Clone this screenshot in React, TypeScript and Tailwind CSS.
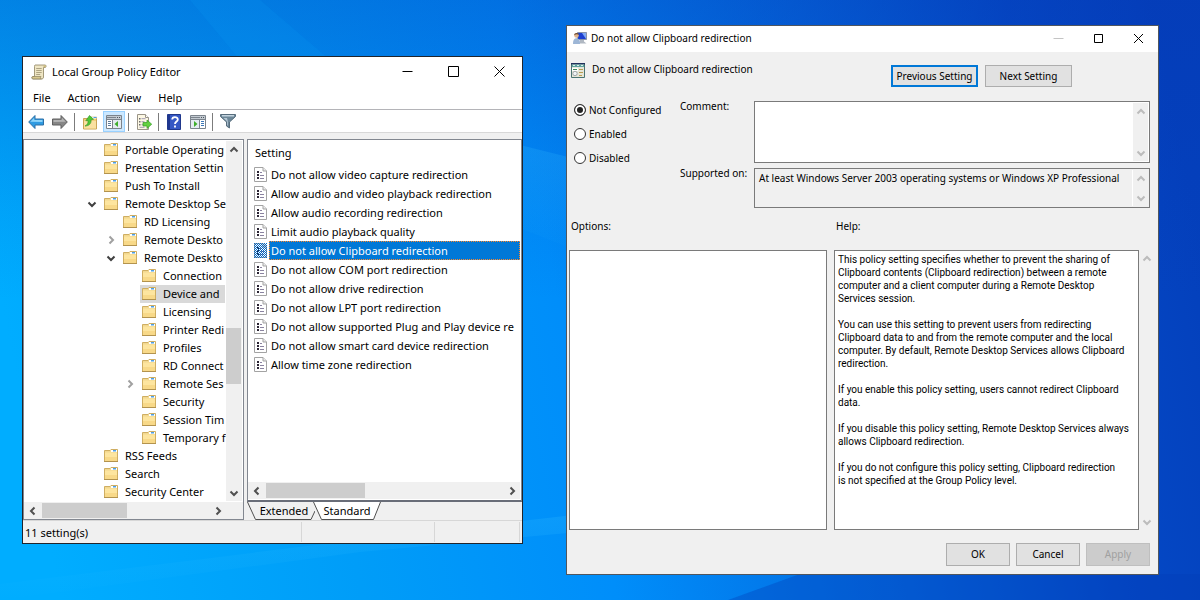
import { useState, type ReactNode } from "react";

type Direction = "up" | "down" | "left" | "right";

const chevrons: Record<Direction, string> = {
  up: "M1.5 6.5 5 3l3.5 3.5",
  down: "M1.5 3.5 5 7l3.5-3.5",
  left: "M6.5 1.5 3 5l3.5 3.5",
  right: "M3.5 1.5 7 5 3.5 8.5",
};

function Chevron({ dir, color = "#505050" }: { dir: Direction; color?: string }) {
  return (
    <svg viewBox="0 0 10 10" className="size-[10px] shrink-0" fill="none" stroke={color} strokeWidth="2">
      <path d={chevrons[dir]} />
    </svg>
  );
}

function ScrollButton({ dir, color }: { dir: Direction; color?: string }) {
  const vertical = dir === "up" || dir === "down";
  return (
    <button
      type="button"
      aria-label={`Scroll ${dir}`}
      className={`flex h-[17px] shrink-0 items-center justify-center ${vertical ? "w-full" : "w-[17px]"}`}
    >
      <Chevron dir={dir} color={color} />
    </button>
  );
}

function Backdrop() {
  return (
    <svg className="absolute inset-0 size-full" viewBox="0 0 1200 600" preserveAspectRatio="none" aria-hidden="true">
      <defs>
        <linearGradient id="sky" x1="0" y1="0.5" x2="1" y2="0.4">
          <stop offset="0" stopColor="#00adff" />
          <stop offset="0.25" stopColor="#009df8" />
          <stop offset="0.46" stopColor="#008efa" />
          <stop offset="0.7" stopColor="#0468de" />
          <stop offset="0.88" stopColor="#0449c6" />
          <stop offset="1" stopColor="#0440bc" />
        </linearGradient>
        <linearGradient id="dusk" x1="0" y1="0" x2="0" y2="1">
          <stop offset="0" stopColor="#0538b4" stopOpacity="0.34" />
          <stop offset="0.35" stopColor="#0538b4" stopOpacity="0.08" />
          <stop offset="0.5" stopColor="#0538b4" stopOpacity="0" />
        </linearGradient>
        <linearGradient id="ray" x1="0" y1="0" x2="0" y2="1">
          <stop offset="0" stopColor="#36c0ff" stopOpacity="0.22" />
          <stop offset="1" stopColor="#36c0ff" stopOpacity="0" />
        </linearGradient>
      </defs>
      <rect width="1200" height="600" fill="url(#sky)" />
      <rect width="1200" height="600" fill="url(#dusk)" />
      <path d="M0 584 340 542 600 512V530L360 552 0 600Z" fill="url(#ray)" />
      <path d="M500 140 600 165V260L500 220Z" fill="url(#ray)" />
      <path d="M728 600 800 574H1200V600Z" fill="#043cb8" fillOpacity="0.35" />
      <path d="M190 0H260L330 60H240Z" fill="#0a9af5" fillOpacity="0.18" />
    </svg>
  );
}

function FolderIcon() {
  return (
    <svg viewBox="0 0 14 14" className="size-[14px] shrink-0">
      <path d="M0.5 12.500V1.500h5.500L7 0.500h6.500V12.500Z" fill="#f2d890" stroke="#cfae62" />
      <path d="M1 3.500h12V12H1Z" fill="#fde59f" />
      <path d="M1 8h12v4H1Z" fill="#f8d989" />
      <path d="M7 1h6v2H7Z" fill="#fff" />
      <path d="M9 1h3v1.500H9Z" fill="#4d9fe6" />
      <path d="M0 12.500h14" stroke="#b3934e" />
    </svg>
  );
}

function PolicyIcon({ selected }: { selected?: boolean }) {
  return (
    <svg viewBox="0 0 13 15" className="h-[15px] w-[13px]">
      <path d="M0.5 0.500h8.500L12.500 4V14.500h-12Z" fill="#fff" stroke="#a3a3a3" />
      <path d="M9 0.500V4h3.500" fill="#ececec" stroke="#a3a3a3" />
      <path d="M3 4h2v2H3zM3 7h2v2H3zM3 10h2v2H3z" fill="#2a2433" />
      <path d="M6 5.500H8M6 8.500H10M6 11.500H10" stroke="#8a83a0" />
      {selected && (
        <>
          <defs>
            <pattern id="dither" width="2" height="2" patternUnits="userSpaceOnUse">
              <path d="M0 0h1v1H0zM1 1h1v1H1z" fill="#0068c8" />
            </pattern>
          </defs>
          <rect width="13" height="15" fill="url(#dither)" />
        </>
      )}
    </svg>
  );
}

function ScrollIcon() {
  return (
    <svg viewBox="0 0 16 16" className="size-4 shrink-0">
      <path d="M4 1h10.500c1 1 .5 2.500-.5 2.500h-1.500V13c0 1.500-1 2-2 2H2c-1.500 0-1.500-2.500 0-2.500h1.500V2.500C3.500 1.800 3.500 1.300 4 1Z" fill="#efe6c4" stroke="#8d8260" strokeWidth="0.8" />
      <path d="M2 12.500h8c-.8.8-.6 2 .3 2.400H2c-1.400 0-1.400-2.400 0-2.400Z" fill="#d9c98f" stroke="#8d8260" strokeWidth="0.7" />
      <path d="M5.200 4.500h5.500M5.200 6.500h5.500M5.200 8.500h5.500M5.200 10.500h4" stroke="#a69c7c" strokeWidth="0.9" />
      <path d="M12.500 1.300v2h1.800c.8-.6.600-1.600 0-2Z" fill="#cdbb7e" />
    </svg>
  );
}

function ArrowIcon({ back }: { back?: boolean }) {
  return (
    <svg viewBox="0 0 16 14" className="h-[14px] w-4">
      {back ? (
        <>
          <path d="M0.700 7 7 0.500V4h8.500v6H7v3.500Z" fill="#2f9be2" stroke="#2c6fa6" />
          <path d="M2.200 6.800 6.200 2.700V5h8.300v2Z" fill="#8ed4fa" />
        </>
      ) : (
        <>
          <path d="M15.300 7 9 0.500V4H0.500v6H9v3.500Z" fill="#868686" stroke="#5f5f5f" />
          <path d="M13.800 6.800 9.800 2.700V5H1.500v2Z" fill="#b4b4b4" />
        </>
      )}
    </svg>
  );
}

function UpFolderIcon() {
  return (
    <svg viewBox="0 0 16 16" className="size-4">
      <path d="M1.500 15V4.500H8L9.500 3H14.500V15Z" fill="#f0cd7c" stroke="#c9a456" />
      <path d="M2 7h12v7.500H2Z" fill="#fae0a0" />
      <path d="M10 2.500h4.500v2H10z" fill="#fff" />
      <path d="M11.500 3h3v1h-3z" fill="#4d9fe6" />
      <path d="M3 12C5.500 11 6.300 9 6 6.500L3.800 6.800 7.500 1.500 11.500 5.200 9 5.800C9.500 9.500 7 12 3 12Z" fill="#4fc836" stroke="#3b9a2c" strokeWidth="0.700" />
    </svg>
  );
}

function PaneIcon({ side }: { side: "left" | "right" }) {
  return (
    <svg viewBox="0 0 16 14" className="h-[14px] w-4">
      <path d="M0.500 0.500h15v13H0.500Z" fill="#fff" stroke="#7b838c" />
      <path d="M1 1h14v3H1Z" fill="#c3cad1" />
      <path d="M1 2.500h9M1 4.500h14" stroke="#7b838c" />
      <path d="M11 2h1v1h-1zM13 2h1v1h-1z" fill="#4c555e" />
      {side === "left" ? (
        <>
          <path d="M6.500 5v8.500" stroke="#7b838c" />
          <path d="M2 6.500h3M2 8.500h3M2 10.500h3" stroke="#5c7c9c" />
          <path d="M7 5h8v8H7z" fill="#e4ebf1" />
          <path d="M12 6v6L8.500 9Z" fill="#3fae2c" />
        </>
      ) : (
        <>
          <path d="M1 5h8v8H1z" fill="#e4ebf1" />
          <path d="M9.500 5v8.500" stroke="#7b838c" />
          <path d="M11 6.500h3M11 8.500h3M11 10.500h3" stroke="#3c78b8" />
          <path d="M4 6v6l3.500-3Z" fill="#3fae2c" />
        </>
      )}
    </svg>
  );
}

function ExportIcon() {
  return (
    <svg viewBox="0 0 16 16" className="size-4">
      <path d="M1.500 0.500h8L12.500 3.500V15.500h-11Z" fill="#fdf8e4" stroke="#9a9488" />
      <path d="M9.500 0.500v3h3" fill="#fff" stroke="#9a9488" />
      <path d="M3 4h1.500v1.500H3zM3 7h1.500v1.500H3zM3 10h1.500v1.500H3z" fill="#6c6c6c" />
      <path d="M5.500 4.700h4M5.500 7.700h3M5.500 10.700h2M3.500 13.300h5" stroke="#a39bb5" />
      <path d="M7 8.500h4V6l4.700 4.200L11 14.500V12H7Z" fill="#63d13f" stroke="#339a26" strokeWidth="0.700" />
    </svg>
  );
}

function HelpIcon() {
  return (
    <svg viewBox="0 0 14 16" className="h-4 w-[14px]">
      <path d="M0.500 0.500h13v15H0.500Z" fill="#3558c4" stroke="#20388c" />
      <path d="M1 1h2v14H1Z" fill="#1f3690" />
      <path d="M5.200 5.500C5.200 2.300 10.800 2.300 10.800 5.400 10.800 7.500 8 7.500 8 10M8 11.500v2" fill="none" stroke="#fff" strokeWidth="1.800" />
    </svg>
  );
}

function FilterIcon() {
  return (
    <svg viewBox="0 0 16 15" className="h-[15px] w-4">
      <path d="M0.500 0.500h15v2L9.500 8v6L6.500 12V8L0.500 2.500Z" fill="#6d8798" stroke="#566c7c" />
      <path d="M2 1h12v1.500H2Z" fill="#c3d3de" />
      <path d="M3.500 4h3.500l1 4v4L7.200 11V7.500Z" fill="#b7c9d6" />
    </svg>
  );
}

function UserMonitorIcon() {
  return (
    <svg viewBox="0 0 14 14" className="size-[14px] shrink-0">
      <path d="M4.500 1.500h9v7h-9Z" fill="#1c3fd0" stroke="#8a94a8" />
      <path d="M9 2h4v6Z" fill="#7fa8f4" />
      <path d="M7 9h4v1.500l2.500 2H6Z" fill="#b0b8c2" />
      <circle cx="3.500" cy="4.500" r="2.300" fill="#e2b48c" />
      <path d="M1.200 4.300C1 1.500 5.800 1.200 5.800 4 4.500 3 3 3 1.200 4.300Z" fill="#6b4a30" />
      <path d="M0 13C0 8 2 7.300 3.500 7.300S7 8 7 13Z" fill="#9db6d6" />
    </svg>
  );
}

function SettingIcon() {
  return (
    <svg viewBox="0 0 14 15" className="h-[15px] w-[14px] shrink-0">
      <path d="M0.500 0.500h13v14H0.500Z" fill="#e6e6d8" stroke="#4b7472" />
      <path d="M0 0h14v1.500H0Z" fill="#23305c" />
      <path d="M1 1.500h12v2.500H1Z" fill="#5fa3a0" />
      <path d="M2 2h2v1H2zM6 2h2v1H6zM10 2h2v1h-2z" fill="#d8efe8" />
      <path d="M1 5h6v3H1Z" fill="#fff" />
      <path d="M8 6.500h4M8 9.500h4M8 12.500h3" stroke="#b89d52" />
      <circle cx="4" cy="10.500" r="2.200" fill="#f2f4f5" stroke="#8d959b" strokeWidth="0.800" />
      <path d="M2 6.500h4" stroke="#3d8a58" />
    </svg>
  );
}

function CaptionButtons({ size, minColor }: { size: "wide" | "narrow"; minColor: string }) {
  const cls = `flex items-center justify-center ${size === "wide" ? "w-[46px]" : "w-10"}`;
  return (
    <div className="flex self-stretch">
      <button type="button" aria-label="Minimize" className={cls}>
        <svg viewBox="0 0 11 11" className="size-[11px]" stroke={minColor}><path d="M0.500 5.500h10" /></svg>
      </button>
      <button type="button" aria-label="Maximize" className={cls}>
        <svg viewBox="0 0 11 11" className="size-[11px]" fill="none" stroke="#000">
          <path d={size === "wide" ? "M0.500 0.500h10v10H0.500Z" : "M1.500 1.500h8v8h-8Z"} />
        </svg>
      </button>
      <button type="button" aria-label="Close" className={cls}>
        <svg viewBox="0 0 11 11" className="size-[11px]" stroke="#000">
          <path d={size === "wide" ? "M0.500 0.500l10 10M10.500 0.500l-10 10" : "M1 1l9 9M10 1l-9 9"} />
        </svg>
      </button>
    </div>
  );
}

const tools: { label: string; icon: ReactNode; active?: boolean; divider?: boolean }[] = [
  { label: "Back", icon: <ArrowIcon back /> },
  { label: "Forward", icon: <ArrowIcon />, divider: true },
  { label: "Up one level", icon: <UpFolderIcon /> },
  { label: "Show console tree", icon: <PaneIcon side="left" />, active: true, divider: true },
  { label: "Export list", icon: <ExportIcon />, divider: true },
  { label: "Help topics", icon: <HelpIcon /> },
  { label: "Show action pane", icon: <PaneIcon side="right" />, divider: true },
  { label: "Filter options", icon: <FilterIcon /> },
];

const tree: { name: string; level: 0 | 1 | 2; state?: "open" | "closed"; selected?: boolean }[] = [
  { name: "Portable Operating", level: 0 },
  { name: "Presentation Settin", level: 0 },
  { name: "Push To Install", level: 0 },
  { name: "Remote Desktop Se", level: 0, state: "open" },
  { name: "RD Licensing", level: 1 },
  { name: "Remote Deskto", level: 1, state: "closed" },
  { name: "Remote Deskto", level: 1, state: "open" },
  { name: "Connection", level: 2 },
  { name: "Device and", level: 2, selected: true },
  { name: "Licensing", level: 2 },
  { name: "Printer Redi", level: 2 },
  { name: "Profiles", level: 2 },
  { name: "RD Connect", level: 2 },
  { name: "Remote Ses", level: 2, state: "closed" },
  { name: "Security", level: 2 },
  { name: "Session Tim", level: 2 },
  { name: "Temporary f", level: 2 },
  { name: "RSS Feeds", level: 0 },
  { name: "Search", level: 0 },
  { name: "Security Center", level: 0 },
];

const indents = ["pl-[60px]", "pl-[79px]", "pl-[98px]"];

const settings = [
  "Do not allow video capture redirection",
  "Allow audio and video playback redirection",
  "Allow audio recording redirection",
  "Limit audio playback quality",
  "Do not allow Clipboard redirection",
  "Do not allow COM port redirection",
  "Do not allow drive redirection",
  "Do not allow LPT port redirection",
  "Do not allow supported Plug and Play device re",
  "Do not allow smart card device redirection",
  "Allow time zone redirection",
];

function ConsoleTree() {
  return (
    <div className="flex min-w-0 flex-col border border-[#828790] bg-white pt-px">
      <div className="flex">
        <ul className="min-w-0 flex-1 overflow-hidden pr-px">
          {tree.map((node, i) => (
            <li key={i} className={`flex h-[18px] items-center ${indents[node.level]}`}>
              <span className="flex w-[18px] shrink-0 items-center justify-center pr-[2px]">
                {node.state && (
                  <Chevron dir={node.state === "open" ? "down" : "right"} color={node.state === "open" ? "#404040" : "#a0a0a0"} />
                )}
              </span>
              <span className={`flex h-full min-w-0 flex-1 items-center gap-[7px] whitespace-nowrap pl-[2px] ${node.selected ? "bg-[#d9d9d9]" : ""}`}>
                <FolderIcon />
                {node.name}
              </span>
            </li>
          ))}
        </ul>
        <div className="mr-px flex w-4 flex-col bg-[#f0f0f0]">
          <ScrollButton dir="up" />
          <div className="min-h-0 flex-[170]" />
          <div className="mr-px flex-[56] bg-[#cdcdcd]" />
          <div className="flex-[100]" />
          <ScrollButton dir="down" />
        </div>
      </div>
      <div className="mt-px flex h-[17px] bg-[#f0f0f0]">
        <ScrollButton dir="left" />
        <div className="my-px ml-px flex-[85] bg-[#cdcdcd]" />
        <div className="flex-[82]" />
        <ScrollButton dir="right" />
        <div className="w-[17px]" />
      </div>
    </div>
  );
}

function ResultPane() {
  const [selected, setSelected] = useState(4);
  return (
    <div className="flex min-w-0 flex-col">
      <div className="flex flex-1 flex-col border border-b-2 border-[#828790] border-b-[#696d78] bg-white pr-px">
        <table className="w-full table-fixed border-collapse">
          <colgroup>
            <col className="w-[21px]" />
            <col />
          </colgroup>
          <thead>
            <tr className="h-[25px]">
              <th scope="col" colSpan={2} className="p-0 pl-[7px] text-left font-normal">Setting</th>
            </tr>
          </thead>
          <tbody>
            {settings.map((name, i) => (
              <tr key={name} className="h-[19px]" onClick={() => setSelected(i)}>
                <td className="p-0 pl-[6px]"><PolicyIcon selected={i === selected} /></td>
                <td className="p-0">
                  <div className={`h-[19px] overflow-hidden border border-dotted pl-px leading-[17px] whitespace-nowrap ${i === selected ? "border-[#ff8728] bg-[#0078d7] text-white" : "border-transparent"}`}>
                    {name}
                  </div>
                </td>
              </tr>
            ))}
          </tbody>
        </table>
        <div className="mt-auto mb-px flex h-[17px] bg-[#f0f0f0]">
          <ScrollButton dir="left" />
          <div className="my-px ml-px flex-[99] bg-[#cdcdcd]" />
          <div className="flex-[138]" />
          <ScrollButton dir="right" />
        </div>
      </div>
      <div role="tablist" className="flex h-[18px]">
        <button type="button" role="tab" aria-selected="false" className="relative w-[68px] pl-[6px]">
          <svg viewBox="0 0 68 18" className="absolute inset-0 size-full" fill="none" stroke="#505050"><path d="M0.500 0 8.500 17.500H64L68 9" /></svg>
          <span className="relative">Extended</span>
        </button>
        <button type="button" role="tab" aria-selected="true" className="relative -ml-[2px] w-[68px]">
          <svg viewBox="0 0 68 18" className="absolute inset-0 size-full" fill="#fff" stroke="#505050"><path d="M0.500 0 8.500 17.500H60.500L67.500 0" /></svg>
          <span className="relative">Standard</span>
        </button>
      </div>
    </div>
  );
}

function PolicyEditor() {
  return (
    <section className="mt-[31px] min-w-0 border border-[#20242c] bg-[#f0f0f0] text-[11px] leading-4">
      <header className="flex h-[30px] items-center bg-white pb-px pl-2">
        <ScrollIcon />
        <h1 className="flex-1 pl-[5px]">Local Group Policy Editor</h1>
        <CaptionButtons size="wide" minColor="#000" />
      </header>
      <nav className="flex h-[22px] items-center gap-[17px] bg-white pl-[10px]">
        <button type="button">File</button>
        <button type="button">Action</button>
        <button type="button">View</button>
        <button type="button">Help</button>
      </nav>
      <div className="flex h-6 items-center gap-[2px] border-y border-t-[#b4b4b8] border-b-[#d8d8d8] bg-white pt-px pl-[2px]">
        {tools.map((t) => (
          <div key={t.label} className="flex h-full items-center">
            <button type="button" aria-label={t.label} className={`flex h-full w-[22px] items-center justify-center ${t.active ? "border border-[#99d1ff] bg-[#cce8ff]" : ""}`}>
              {t.icon}
            </button>
            {t.divider && <span className="mr-[2px] ml-[3px] h-[18px] w-px bg-[#7c7c7c]" />}
          </div>
        ))}
      </div>
      <div className="grid grid-cols-[minmax(0,221fr)_minmax(0,275fr)] gap-[3px] pt-[6px]">
        <ConsoleTree />
        <ResultPane />
      </div>
      <footer className="flex h-[23px] items-stretch border-t border-[#d7d7d7] pr-[2px]">
        <p className="flex flex-[278] items-center pt-px pl-[2px]">11 setting(s)</p>
        <div className="my-px flex-[133] border-x border-[#d7d7d7]" />
        <div className="my-px flex-[85] border-r border-[#d7d7d7]" />
      </footer>
    </section>
  );
}

function SideScroll() {
  return (
    <div className="flex w-[15px] shrink-0 flex-col justify-between bg-[#f0f0f0]">
      <ScrollButton dir="up" color="#bcbcbc" />
      <ScrollButton dir="down" color="#bcbcbc" />
    </div>
  );
}

const helpText = [
  "This policy setting specifies whether to prevent the sharing of\nClipboard contents (Clipboard redirection) between a remote\ncomputer and a client computer during a Remote Desktop\nServices session.",
  "You can use this setting to prevent users from redirecting\nClipboard data to and from the remote computer and the local\ncomputer. By default, Remote Desktop Services allows Clipboard\nredirection.",
  "If you enable this policy setting, users cannot redirect Clipboard\ndata.",
  "If you disable this policy setting, Remote Desktop Services always\nallows Clipboard redirection.",
  "If you do not configure this policy setting, Clipboard redirection\nis not specified at the Group Policy level.",
];

const states = ["Not Configured", "Enabled", "Disabled"];

function PolicyDialog() {
  const [state, setState] = useState(states[0]);
  return (
    <section className="min-w-0 border border-[#50565e] bg-[#f0f0f0] text-[10px] leading-[13px]">
      <header className="flex h-[26px] items-center bg-white pb-[2px] pl-[6px]">
        <UserMonitorIcon />
        <h2 className="flex-1 pl-1">Do not allow Clipboard redirection</h2>
        <CaptionButtons size="narrow" minColor="#c4c4c4" />
      </header>
      <div className="flex items-start gap-[7px] pt-[11px] pr-[86px] pl-1">
        <SettingIcon />
        <p className="flex-1">Do not allow Clipboard redirection</p>
        <button type="button" className="mt-[2px] h-[22px] w-[87px] border-2 border-[#0078d7] bg-[#e1e1e1]">Previous Setting</button>
        <button type="button" className="mt-[2px] h-[22px] w-[87px] border border-[#adadad] bg-[#e1e1e1]">Next Setting</button>
      </div>
      <div className="grid grid-cols-[109px_74px_1fr] pt-[14px] pr-2 pl-1">
        <div role="radiogroup" aria-label="Policy state" className="-mt-[3px] flex flex-col">
          {states.map((s) => (
            <label key={s} className="flex h-6 items-center gap-[3px] pl-[3px]">
              <input
                type="radio"
                name="state"
                checked={state === s}
                onChange={() => setState(s)}
                className="size-3 appearance-none rounded-full border border-[#333] bg-white checked:bg-[#222] checked:shadow-[inset_0_0_0_2px_white]"
              />
              {s}
            </label>
          ))}
        </div>
        <div className="flex flex-col">
          <label htmlFor="comment" className="-mt-px h-[67px]">Comment:</label>
          <label htmlFor="supported">Supported on:</label>
        </div>
        <div className="flex flex-col gap-[5px]">
          <div className="flex h-[62px] border border-[#7a7a7a] bg-white p-px">
            <textarea id="comment" className="min-w-0 flex-1 resize-none px-1 outline-none" />
            <SideScroll />
          </div>
          <div className="flex h-10 border border-[#7a7a7a] p-px">
            <textarea
              id="supported"
              readOnly
              value="At least Windows Server 2003 operating systems or Windows XP Professional"
              className="min-w-0 flex-1 resize-none overflow-hidden border-r border-white px-[3px] py-[2px] outline-none"
            />
            <SideScroll />
          </div>
        </div>
      </div>
      <div className="grid grid-cols-[minmax(0,258fr)_minmax(0,322fr)] gap-x-[7px] px-[2px] pt-3">
        <h3 className="h-[30px] pl-[2px]">Options:</h3>
        <h3 className="h-[30px] pl-[2px]">Help:</h3>
        <div className="border border-[#7a7a7a] bg-white" />
        <div className="flex min-h-[280px] pr-[2px]">
          <div className="min-w-0 flex-1 space-y-[13px] border border-[#7a7a7a] bg-white py-[2px] pl-[3px] font-['Roboto','Noto_Sans',sans-serif] whitespace-pre">
            {helpText.map((p) => (
              <p key={p}>{p}</p>
            ))}
          </div>
          <SideScroll />
        </div>
      </div>
      <footer className="flex justify-end gap-[6px] pt-[13px] pr-2 pb-2">
        <button type="button" className="h-[23px] w-16 border border-[#adadad] bg-[#e1e1e1]">OK</button>
        <button type="button" className="h-[23px] w-16 border border-[#adadad] bg-[#e1e1e1]">Cancel</button>
        <button type="button" disabled className="h-[23px] w-16 border border-[#bfbfbf] bg-[#cccccc] text-[#a0a0a0]">Apply</button>
      </footer>
    </section>
  );
}

export default function App() {
  return (
    <main className="relative min-h-screen overflow-hidden font-['Noto_Sans','Open_Sans',sans-serif] text-black">
      <Backdrop />
      <div className="relative grid grid-cols-[501fr_593fr] items-start gap-[43px] pt-[25px] pr-[41px] pb-[25px] pl-[22px]">
        <PolicyEditor />
        <PolicyDialog />
      </div>
    </main>
  );
}
